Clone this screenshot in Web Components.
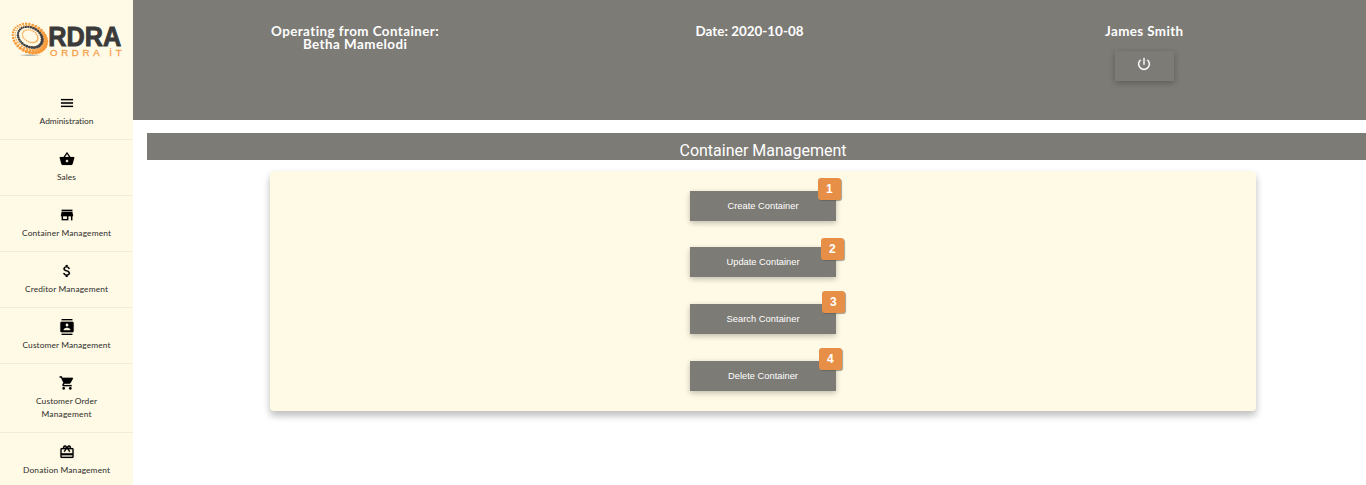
<!DOCTYPE html>
<html lang="en">
<head>
<meta charset="utf-8">
<title>Container Management</title>
<style>html,body{margin:0;height:100%;overflow:hidden;background:#fff}</style>
</head>
<body>
<app-shell></app-shell>
<script>
const define = (name, html, ready) => customElements.define(name, class extends HTMLElement {
  connectedCallback() {
    if (this.shadowRoot) return;
    const t = document.createElement('template');
    t.innerHTML = typeof html === 'function' ? html(this) : html;
    this.attachShadow({mode: 'open'}).append(t.content.cloneNode(true));
    if (ready) ready(this);
  }
});

// One line of text tracked so that it spans the width given in its "w" attribute.
define('fit-text', `<style>:host{display:block;white-space:nowrap}span{display:inline-block}</style><span><slot></slot></span>`, el => {
  const s = el.shadowRoot.querySelector('span');
  const n = el.textContent.length;
  const gap = (+el.getAttribute('w') - s.getBoundingClientRect().width) / (n - 1);
  s.style.letterSpacing = gap + 'px';
  s.style.marginRight = -gap + 'px';
});

const icons = {
  menu: 'M3 18h18v-2H3v2zm0-5h18v-2H3v2zm0-7v2h18V6H3z',
  basket: 'M17.21 9l-4.38-6.56c-.19-.28-.51-.42-.83-.42-.32 0-.64.14-.83.43L6.79 9H2c-.55 0-1 .45-1 1 0 .09.01.18.04.27l2.54 9.27c.23.84 1 1.46 1.92 1.46h13c.92 0 1.69-.62 1.93-1.46l2.54-9.27L23 10c0-.55-.45-1-1-1h-4.79zM9 9l3-4.4L15 9H9zm3 8c-1.1 0-2-.9-2-2s.9-2 2-2 2 .9 2 2-.9 2-2 2z',
  store: 'M20 4H4v2h16V4zm1 10v-2l-1-5H4l-1 5v2h1v6h10v-6h4v6h2v-6h1zm-9 4H6v-4h6v4z',
  money: 'M11.8 10.9c-2.27-.59-3-1.2-3-2.15 0-1.09 1.01-1.85 2.7-1.85 1.78 0 2.44.85 2.5 2.1h2.21c-.07-1.72-1.12-3.3-3.21-3.81V3h-3v2.16c-1.94.42-3.5 1.68-3.5 3.61 0 2.31 1.91 3.46 4.7 4.13 2.5.6 3 1.48 3 2.41 0 .69-.49 1.79-2.7 1.79-2.06 0-2.87-.92-2.98-2.1h-2.2c.12 2.19 1.76 3.42 3.68 3.83V21h3v-2.15c1.95-.37 3.5-1.5 3.5-3.55 0-2.84-2.43-3.81-4.7-4.4z',
  contacts: 'M20 0H4v2h16V0zM4 24h16v-2H4v2zM20 4H4c-1.1 0-2 .9-2 2v12c0 1.1.9 2 2 2h16c1.1 0 2-.9 2-2V6c0-1.1-.9-2-2-2zm-8 2.75c1.24 0 2.25 1.01 2.25 2.25s-1.01 2.25-2.25 2.25S9.75 10.24 9.75 9 10.76 6.75 12 6.75zM17 17H7v-1.5c0-1.67 3.33-2.5 5-2.5s5 .83 5 2.5V17z',
  cart: 'M7 18c-1.1 0-1.99.9-1.99 2S5.9 22 7 22s2-.9 2-2-.9-2-2-2zM1 2v2h2l3.6 7.59-1.35 2.45c-.16.28-.25.61-.25.96 0 1.1.9 2 2 2h12v-2H7.42c-.14 0-.25-.11-.25-.25l.03-.12.9-1.63h7.45c.75 0 1.41-.41 1.75-1.03l3.58-6.49c.08-.14.12-.31.12-.48 0-.55-.45-1-1-1H5.21l-.94-2H1zm16 16c-1.1 0-1.99.9-1.99 2s.89 2 1.99 2 2-.9 2-2-.9-2-2-2z',
  gift: 'M20 6h-2.18c.11-.31.18-.65.18-1 0-1.66-1.34-3-3-3-1.05 0-1.96.54-2.5 1.35l-.5.67-.5-.68C10.96 2.54 10.05 2 9 2 7.34 2 6 3.34 6 5c0 .35.07.69.18 1H4c-1.11 0-1.99.89-1.99 2L2 19c0 1.11.89 2 2 2h16c1.11 0 2-.89 2-2V8c0-1.11-.89-2-2-2zm-5-2c.55 0 1 .45 1 1s-.45 1-1 1-1-.45-1-1 .45-1 1-1zM9 4c.55 0 1 .45 1 1s-.45 1-1 1-1-.45-1-1 .45-1 1-1zm11 15H4v-2h16v2zm0-5H4V8h5.08L7 10.83 8.62 12 11 8.76l1-1.36 1 1.36L15.38 12 17 10.83 14.92 8H20v6z',
  power: 'M13 3h-2v10h2V3zm4.83 2.17l-1.42 1.42C17.99 7.86 19 9.81 19 12c0 3.87-3.13 7-7 7s-7-3.13-7-7c0-2.19 1.01-4.14 2.58-5.42L6.17 5.17C4.23 6.82 3 9.26 3 12c0 4.97 4.03 9 9 9s9-4.03 9-9c0-2.74-1.23-5.18-3.17-6.83z'
};
define('md-icon', el => `<style>:host{display:block;width:16px;height:16px}svg{display:block;width:100%;height:100%;fill:currentColor;stroke:currentColor;stroke-width:.25}</style>
<svg viewBox="0 0 24 24"><path d="${icons[el.getAttribute('name')]}"/></svg>`);

// Beads placed round a tilted ellipse, heavier toward the lower right.
const beads = (cx, cy, rx, ry, n, r, grow, fill) => {
  let out = '';
  for (let i = 0; i < n; i++) {
    const a = i / n * 2 * Math.PI, t = 28 * Math.PI / 180;
    const x = rx * Math.cos(a), y = ry * Math.sin(a);
    const px = x * Math.cos(t) - y * Math.sin(t), py = x * Math.sin(t) + y * Math.cos(t);
    const size = r + grow * (px + py) / 30;
    out += `<circle cx="${(cx + px).toFixed(2)}" cy="${(cy + py).toFixed(2)}" r="${size.toFixed(2)}" fill="${fill}"/>`;
  }
  return out;
};
define('brand-logo', `<style>:host{display:block;height:84px}svg{display:block}text{font-family:"Liberation Sans",Arial,sans-serif}</style>
<svg width="133" height="84" viewBox="0 0 133 84">
<defs><radialGradient id="s"><stop offset="0" stop-color="#777" stop-opacity=".75"/><stop offset="1" stop-color="#777" stop-opacity="0"/></radialGradient></defs>
<ellipse cx="30" cy="55.2" rx="12" ry="1.3" fill="url(#s)"/>
${beads(29.5, 38.2, 17.6, 13.4, 32, 1.55, .6, '#f79a3a')}
${beads(29.7, 37.8, 15.4, 11.4, 32, 1.1, .5, '#f9a44a')}
${beads(30.1, 37.2, 12.8, 9.6, 30, 1.35, .35, '#444240')}
${beads(30.2, 36.2, 8.2, 5.8, 26, .75, .2, '#f9a040')}
<text x="48.3" y="45.5" font-size="27" font-weight="700" fill="#3a3a3a" stroke="#3a3a3a" stroke-width=".9" textLength="73" lengthAdjust="spacingAndGlyphs">RDRA</text>
<text x="50" y="55.8" font-size="9.6" fill="#f6a04a" stroke="#f6a04a" stroke-width=".3" textLength="71.5" lengthAdjust="spacing">ORDRA İT</text>
</svg>`);

define('nav-item', `<style>
:host{display:flex;flex-direction:column;align-items:center;gap:4px;padding:11px 0;border-bottom:1px solid #f4ecda;color:#000}
div{display:flex;flex-direction:column;align-items:center;font:8.4px/13px Lato,sans-serif;color:#2d2d2b}
</style><slot name="icon"></slot><div><slot></slot></div>`);

const nav = [['menu', ['Administration', 54]], ['basket', ['Sales', 19]], ['store', ['Container Management', 89]],
  ['money', ['Creditor Management', 83]], ['contacts', ['Customer Management', 88]],
  ['cart', ['Customer Order', 61], ['Management', 50]], ['gift', ['Donation Management', 87]]];
define('side-nav', `<style>:host{display:block;width:133px;flex:none;background:#fffae6;overflow:hidden}</style>
<brand-logo></brand-logo>${nav.map(([i, ...l]) => `<nav-item><md-icon slot="icon" name="${i}"></md-icon>${l.map(([t, w]) => `<fit-text w="${w}">${t}</fit-text>`).join('')}</nav-item>`).join('')}`);

define('top-bar', `<style>
:host{display:grid;grid-template-columns:repeat(3,1fr);height:120px;box-sizing:border-box;padding:25px 24.6px 0;background:#7d7b76;color:#fff;font:700 13.4px/13px Lato,sans-serif}
section{display:flex;flex-direction:column;align-items:center}
button{margin:13px 0 0;width:59px;height:30px;padding:0;border:0;background:#7d7b76;color:#fff;display:grid;place-items:center;box-shadow:0 2px 5px rgba(0,0,0,.16),0 2px 8px rgba(0,0,0,.1)}
md-icon{margin-top:-4px}
</style>
<section><fit-text w="168">Operating from Container:</fit-text><fit-text w="104">Betha Mamelodi</fit-text></section>
<section><fit-text w="108">Date: 2020-10-08</fit-text></section>
<section><fit-text w="78">James Smith</fit-text><button aria-label="Log out"><md-icon name="power"></md-icon></button></section>`);

define('step-button', el => `<style>
:host{display:block;position:relative;width:146px;height:30px}
button{width:100%;height:100%;padding:0;border:0;background:#7d7b76;color:#fff;display:grid;place-items:center;box-shadow:0 2px 5px rgba(0,0,0,.18),0 2px 8px rgba(0,0,0,.08)}
button{font:9.3px/12px "Liberation Sans",Arial,sans-serif}
b{position:absolute;left:${el.getAttribute('bx')}px;top:${el.getAttribute('by')}px;width:22.5px;height:22px;border-radius:3px;background:#e78f47;color:#fff;font:700 12px/22px "Liberation Sans",Arial,sans-serif;text-align:center;box-shadow:1px 1px 1px rgba(90,85,75,.55)}
</style><button><slot></slot></button><b>${el.getAttribute('step')}</b>`);

define('menu-card', `<style>
:host{display:flex;flex-direction:column;align-items:center;box-sizing:border-box;width:986px;height:240px;margin:11px auto 0;padding-top:20px;gap:27px;background:#fffae6;border-radius:4px;box-shadow:0 5px 7px rgba(0,0,0,.2),0 3px 10px rgba(0,0,0,.08)}
::slotted(:first-child){margin-bottom:-1px}
</style><slot></slot>`);

define('page-title', `<style>:host{display:flex;justify-content:center;height:27px;background:#7d7b76;color:#fff;font:16px/35px Roboto,sans-serif}</style><slot></slot>`);

define('app-shell', `<style>
:host{display:flex;height:485px;overflow:hidden}
main{flex:1;min-width:0;overflow:hidden}
.page{width:1232px;margin:13px 0 0 14px}
</style>
<side-nav></side-nav>
<main><top-bar></top-bar><div class="page">
<page-title><fit-text w="167">Container Management</fit-text></page-title>
<menu-card>
<step-button step="1" bx="128" by="-13"><fit-text w="71">Create Container</fit-text></step-button>
<step-button step="2" bx="131" by="-9"><fit-text w="73">Update Container</fit-text></step-button>
<step-button step="3" bx="132" by="-13"><fit-text w="73">Search Container</fit-text></step-button>
<step-button step="4" bx="129" by="-13"><fit-text w="70">Delete Container</fit-text></step-button>
</menu-card></div></main>`);
</script>
</body>
</html>
